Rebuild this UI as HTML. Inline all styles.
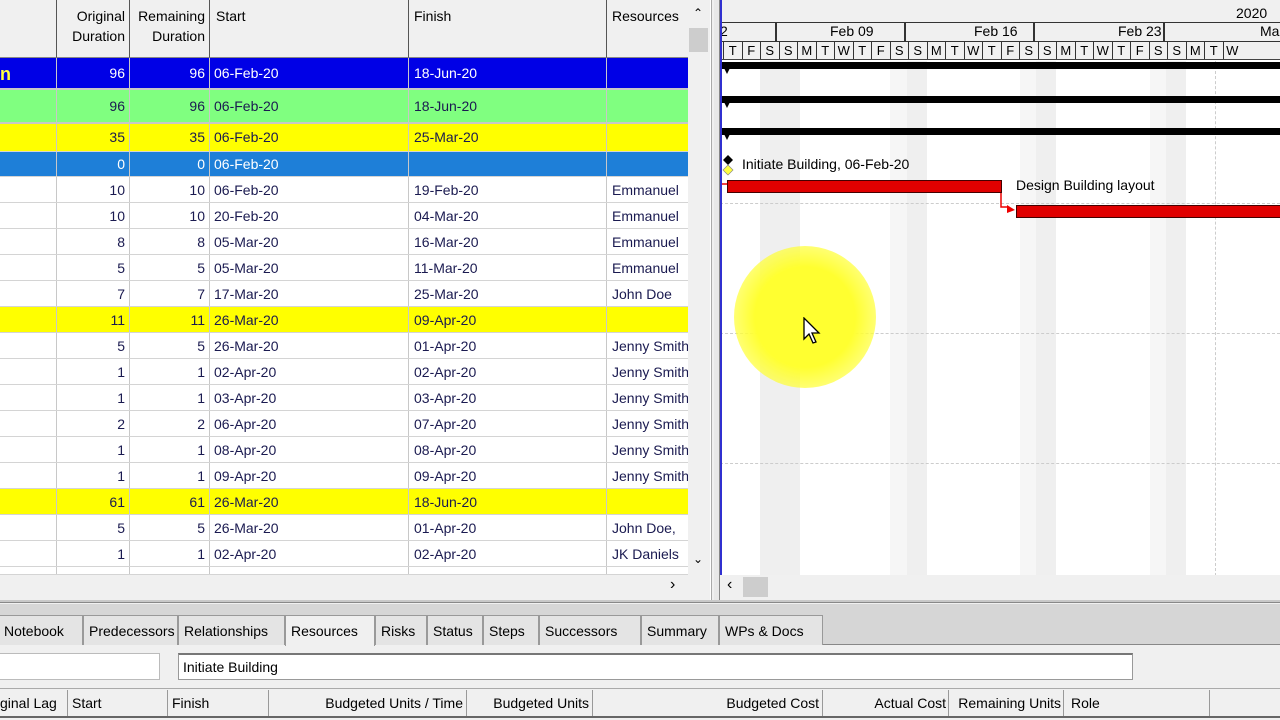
<!DOCTYPE html>
<html><head><style>
*{margin:0;padding:0;box-sizing:border-box}
body{width:1280px;height:720px;overflow:hidden;background:#f0f0f0;font-family:"Liberation Sans",Arial,sans-serif;font-size:14px;position:relative;color:#000}
.a{position:absolute}
.row{position:absolute;left:0;width:688px;height:26px;border-bottom:1px solid #d4d4d4;color:#1a1a50;background:#fff}
.row span{position:absolute;top:0;height:100%;line-height:26px;white-space:nowrap;overflow:hidden}
.c1{left:0;width:57px;border-right:1px solid #c8c8c8}
.c2{left:57px;width:73px;text-align:right;padding-right:4px;border-right:1px solid #c8c8c8}
.c3{left:130px;width:80px;text-align:right;padding-right:4px;border-right:1px solid #c8c8c8}
.c4{left:210px;width:199px;padding-left:4px;border-right:1px solid #c8c8c8}
.c5{left:409px;width:198px;padding-left:5px;border-right:1px solid #c8c8c8}
.c6{left:607px;width:81px;padding-left:5px}
.hd{position:absolute;top:0;height:58px;background:#f0f0f0;border-right:1px solid #555;border-bottom:1px solid #888;line-height:20px;padding-top:6px}
.tab{position:absolute;top:615px;height:30px;line-height:30px;border:1px solid #999;border-bottom:none;background:#e4e4e4;padding-left:5px;font-size:14px}
.bh{position:absolute;top:690px;height:26px;line-height:26px;border-right:1px solid #999;font-size:14px;white-space:nowrap;overflow:hidden}
.d{position:absolute;top:42px;height:17px;width:18.5px;text-align:center;font-size:13px;line-height:17px;border-left:1px solid #333}
</style></head><body>
<div class="hd" style="left:0;width:57px"></div>
<div class="hd" style="left:57px;width:73px;text-align:right;padding-right:4px">Original<br>Duration</div>
<div class="hd" style="left:130px;width:80px;text-align:right;padding-right:4px">Remaining<br>Duration</div>
<div class="hd" style="left:210px;width:199px;padding-left:6px">Start</div>
<div class="hd" style="left:409px;width:198px;padding-left:5px">Finish</div>
<div class="hd" style="left:607px;width:81px;padding-left:5px;border-right:none">Resources</div>
<div class="a" style="left:688px;top:0;width:22px;height:575px;background:#f0f0f0"></div>
<div class="a" style="left:689px;top:28px;width:19px;height:24px;background:#cdcdcd"></div>
<div class="a" style="left:693px;top:6px;font-size:12px">&#8963;</div>
<div class="a" style="left:693px;top:552px;font-size:12px">&#8964;</div>

<div class="row" style="top:58px;height:32px;background:#0000e6;color:#fff;border-bottom:2px solid #c8c8c8"><span class="c1" style="line-height:32px;font-weight:bold;font-size:18px;color:#ffff40">n</span><span class="c2" style="line-height:30px">96</span><span class="c3" style="line-height:30px">96</span><span class="c4" style="line-height:30px">06-Feb-20</span><span class="c5" style="line-height:30px">18-Jun-20</span><span class="c6"></span></div>
<div class="row" style="top:90px;height:34px;background:#80ff80;border-bottom:2px solid #c8c8c8"><span class="c1"></span><span class="c2" style="line-height:32px">96</span><span class="c3" style="line-height:32px">96</span><span class="c4" style="line-height:32px">06-Feb-20</span><span class="c5" style="line-height:32px">18-Jun-20</span></div>
<div class="row" style="top:124px;height:28px;background:#ffff00;color:#1a1a50"><span class="c1"></span><span class="c2">35</span><span class="c3">35</span><span class="c4">06-Feb-20</span><span class="c5">25-Mar-20</span></div>
<div class="row" style="top:152px;height:25px;background:#1e7fd8;color:#fff"><span class="c1" style="line-height:24px"></span><span class="c2" style="line-height:24px">0</span><span class="c3" style="line-height:24px">0</span><span class="c4" style="line-height:24px">06-Feb-20</span><span class="c5"></span></div>
<div class="row" style="top:177px"><span class="c1"></span><span class="c2">10</span><span class="c3">10</span><span class="c4">06-Feb-20</span><span class="c5">19-Feb-20</span><span class="c6">Emmanuel</span></div>
<div class="row" style="top:203px"><span class="c1"></span><span class="c2">10</span><span class="c3">10</span><span class="c4">20-Feb-20</span><span class="c5">04-Mar-20</span><span class="c6">Emmanuel</span></div>
<div class="row" style="top:229px"><span class="c1"></span><span class="c2">8</span><span class="c3">8</span><span class="c4">05-Mar-20</span><span class="c5">16-Mar-20</span><span class="c6">Emmanuel</span></div>
<div class="row" style="top:255px"><span class="c1"></span><span class="c2">5</span><span class="c3">5</span><span class="c4">05-Mar-20</span><span class="c5">11-Mar-20</span><span class="c6">Emmanuel</span></div>
<div class="row" style="top:281px"><span class="c1"></span><span class="c2">7</span><span class="c3">7</span><span class="c4">17-Mar-20</span><span class="c5">25-Mar-20</span><span class="c6">John Doe</span></div>
<div class="row" style="top:307px;background:#ffff00"><span class="c1"></span><span class="c2">11</span><span class="c3">11</span><span class="c4">26-Mar-20</span><span class="c5">09-Apr-20</span></div>
<div class="row" style="top:333px"><span class="c1"></span><span class="c2">5</span><span class="c3">5</span><span class="c4">26-Mar-20</span><span class="c5">01-Apr-20</span><span class="c6">Jenny Smith</span></div>
<div class="row" style="top:359px"><span class="c1"></span><span class="c2">1</span><span class="c3">1</span><span class="c4">02-Apr-20</span><span class="c5">02-Apr-20</span><span class="c6">Jenny Smith</span></div>
<div class="row" style="top:385px"><span class="c1"></span><span class="c2">1</span><span class="c3">1</span><span class="c4">03-Apr-20</span><span class="c5">03-Apr-20</span><span class="c6">Jenny Smith</span></div>
<div class="row" style="top:411px"><span class="c1"></span><span class="c2">2</span><span class="c3">2</span><span class="c4">06-Apr-20</span><span class="c5">07-Apr-20</span><span class="c6">Jenny Smith</span></div>
<div class="row" style="top:437px"><span class="c1"></span><span class="c2">1</span><span class="c3">1</span><span class="c4">08-Apr-20</span><span class="c5">08-Apr-20</span><span class="c6">Jenny Smith</span></div>
<div class="row" style="top:463px"><span class="c1"></span><span class="c2">1</span><span class="c3">1</span><span class="c4">09-Apr-20</span><span class="c5">09-Apr-20</span><span class="c6">Jenny Smith</span></div>
<div class="row" style="top:489px;background:#ffff00"><span class="c1"></span><span class="c2">61</span><span class="c3">61</span><span class="c4">26-Mar-20</span><span class="c5">18-Jun-20</span></div>
<div class="row" style="top:515px"><span class="c1"></span><span class="c2">5</span><span class="c3">5</span><span class="c4">26-Mar-20</span><span class="c5">01-Apr-20</span><span class="c6">John Doe,</span></div>
<div class="row" style="top:541px"><span class="c1"></span><span class="c2">1</span><span class="c3">1</span><span class="c4">02-Apr-20</span><span class="c5">02-Apr-20</span><span class="c6">JK Daniels</span></div>
<div class="row" style="top:567px;height:8px"><span class="c1"></span><span class="c2"></span><span class="c3"></span><span class="c4"></span><span class="c5"></span></div>
<div class="a" style="left:0;top:575px;width:712px;height:25px;background:#f0f0f0"></div>
<div class="a" style="left:670px;top:576px;font-size:16px">›</div>
<div class="a" style="left:710px;top:0;width:2px;height:600px;background:#fff;border-right:1px solid #aaa"></div>
<div class="a" style="left:714px;top:0;width:6px;height:600px;background:#e8e8e8;border-right:1px solid #888"></div>

<div class="a" style="left:720px;top:0;width:560px;height:575px;background:#fff;overflow:hidden">
 <div class="a" style="left:0;top:0;width:560px;height:60px;background:#f0f0f0;border-bottom:1px solid #444"></div>
 <div class="a" style="left:0;top:22px;width:560px;height:1px;background:#333"></div>
 <div class="a" style="left:0;top:41px;width:560px;height:1px;background:#333"></div>
 <div class="a" style="left:516px;top:5px;font-size:14px">2020</div>
 <div class="a" style="left:0;top:23px;font-size:14px">2</div>
 <div class="a" style="left:55px;top:22px;width:2px;height:20px;background:#333"></div>
 <div class="a" style="left:110px;top:23px;font-size:14px">Feb 09</div>
 <div class="a" style="left:184px;top:22px;width:2px;height:20px;background:#333"></div>
 <div class="a" style="left:254px;top:23px;font-size:14px">Feb 16</div>
 <div class="a" style="left:313px;top:22px;width:2px;height:20px;background:#333"></div>
 <div class="a" style="left:398px;top:23px;font-size:14px">Feb 23</div>
 <div class="a" style="left:443px;top:22px;width:2px;height:20px;background:#333"></div>
 <div class="a" style="left:540px;top:23px;font-size:14px">Ma</div>
 <div class="a" style="left:40px;top:61px;width:40px;height:520px;background:#efefef"></div>
 <div class="a" style="left:187px;top:61px;width:20px;height:520px;background:#efefef"></div>
 <div class="a" style="left:316px;top:61px;width:20px;height:520px;background:#efefef"></div>
 <div class="a" style="left:446px;top:61px;width:20px;height:520px;background:#efefef"></div>
 <div class="a" style="left:170px;top:61px;width:17px;height:520px;background:#f6f6f6"></div>
 <div class="a" style="left:300px;top:61px;width:16px;height:520px;background:#f6f6f6"></div>
 <div class="a" style="left:430px;top:61px;width:16px;height:520px;background:#f6f6f6"></div>
 <div class="d" style="left:3px">T</div><div class="d" style="left:21.5px">F</div><div class="d" style="left:40px">S</div>
 <div class="d" style="left:58.5px">S</div><div class="d" style="left:77px">M</div><div class="d" style="left:95.5px">T</div><div class="d" style="left:114px">W</div><div class="d" style="left:132.5px">T</div><div class="d" style="left:151px">F</div><div class="d" style="left:169.5px">S</div>
 <div class="d" style="left:188px">S</div><div class="d" style="left:206.5px">M</div><div class="d" style="left:225px">T</div><div class="d" style="left:243.5px">W</div><div class="d" style="left:262px">T</div><div class="d" style="left:280.5px">F</div><div class="d" style="left:299px">S</div>
 <div class="d" style="left:317.5px">S</div><div class="d" style="left:336px">M</div><div class="d" style="left:354.5px">T</div><div class="d" style="left:373px">W</div><div class="d" style="left:391.5px">T</div><div class="d" style="left:410px">F</div><div class="d" style="left:428.5px">S</div>
 <div class="d" style="left:447px">S</div><div class="d" style="left:465.5px">M</div><div class="d" style="left:484px">T</div><div class="d" style="left:502.5px">W</div>
 <div class="a" style="left:0;top:203px;width:560px;border-top:1px dashed #ccc"></div>
 <div class="a" style="left:0;top:333px;width:560px;border-top:1px dashed #ccc"></div>
 <div class="a" style="left:0;top:463px;width:560px;border-top:1px dashed #ccc"></div>
 <div class="a" style="left:495px;top:61px;height:520px;border-left:1px dashed #ccc"></div>
 <div class="a" style="left:0;top:0;width:2px;height:575px;background:#3030d0"></div>
 <div class="a" style="left:2px;top:62px;width:560px;height:7px;background:#000"></div>
 <div class="a" style="left:2px;top:96px;width:560px;height:7px;background:#000"></div>
 <div class="a" style="left:2px;top:128px;width:560px;height:7px;background:#000"></div>
 <svg class="a" style="left:0;top:60px" width="20" height="90"><path d="M4 8 L10 8 L7 14Z M4 42 L10 42 L7 48Z M4 74 L10 74 L7 80Z" fill="#000"/></svg>
 <svg class="a" style="left:0;top:150px" width="310" height="70"><path d="M8 5 L13 10 L8 15 L3 10Z" fill="#000"/><path d="M8 15 L13 20 L8 25 L3 20Z" fill="#ffff40" stroke="#888" stroke-width=".7"/><path d="M2 34 H7" stroke="#e00" stroke-width="1.5"/><path d="M281 43 V57 H287" stroke="#e00" fill="none" stroke-width="1.5"/><path d="M287 55 L295 60 L287 63Z" fill="#e00"/></svg>
 <div class="a" style="left:22px;top:156px;font-size:14px">Initiate Building, 06-Feb-20</div>
 <div class="a" style="left:7px;top:180px;width:275px;height:13px;background:#e00000;border:1px solid #400"></div>
 <div class="a" style="left:296px;top:177px;font-size:14px">Design Building layout</div>
 <div class="a" style="left:296px;top:205px;width:270px;height:13px;background:#e00000;border:1px solid #400"></div>
 <div class="a" style="left:14px;top:246px;width:142px;height:142px;border-radius:50%;background:radial-gradient(circle,#ffff30 50%,rgba(255,255,60,.6) 78%,rgba(255,255,255,0) 100%)"></div>
 <svg class="a" style="left:83px;top:317px" width="20" height="30"><path d="M1 1 L1 22 L6 17 L10 26 L13 25 L9 16 L16 16Z" fill="#fff" stroke="#000" stroke-width="1.3"/></svg>
</div>
<div class="a" style="left:720px;top:575px;width:560px;height:25px;background:#f0f0f0"></div>
<div class="a" style="left:727px;top:576px;font-size:16px">‹</div>
<div class="a" style="left:743px;top:577px;width:25px;height:20px;background:#cdcdcd"></div>

<div class="a" style="left:0;top:600px;width:1280px;height:3px;background:#c8c8c8;border-bottom:1px solid #888"></div>
<div class="a" style="left:0;top:604px;width:1280px;height:41px;background:#d6d6d6"></div>
<div class="a" style="left:0;top:644px;width:1280px;height:1px;background:#888"></div>
<div class="tab" style="left:-2px;width:85px">Notebook</div>
<div class="tab" style="left:83px;width:95px">Predecessors</div>
<div class="tab" style="left:178px;width:107px">Relationships</div>
<div class="tab" style="left:285px;width:90px;background:#f0f0f0;height:31px">Resources</div>
<div class="tab" style="left:375px;width:52px">Risks</div>
<div class="tab" style="left:427px;width:56px">Status</div>
<div class="tab" style="left:483px;width:56px">Steps</div>
<div class="tab" style="left:539px;width:102px">Successors</div>
<div class="tab" style="left:641px;width:78px">Summary</div>
<div class="tab" style="left:719px;width:104px">WPs &amp; Docs</div>
<div class="a" style="left:0;top:653px;width:160px;height:27px;background:#fff;border:1px solid #bbb;border-left:none"></div>
<div class="a" style="left:178px;top:653px;width:955px;height:27px;background:#fff;border:1px solid #999;border-top:2px solid #777;padding-left:4px;line-height:24px">Initiate Building</div>
<div class="a" style="left:0;top:688px;width:1280px;height:30px;background:#f0f0f0;border-top:1px solid #aaa;border-bottom:2px solid #666"></div>
<div class="bh" style="left:0;width:68px">ginal Lag</div>
<div class="bh" style="left:68px;width:100px;padding-left:4px">Start</div>
<div class="bh" style="left:168px;width:101px;padding-left:4px">Finish</div>
<div class="bh" style="left:269px;width:198px;text-align:right;padding-right:3px">Budgeted Units / Time</div>
<div class="bh" style="left:467px;width:126px;text-align:right;padding-right:3px">Budgeted Units</div>
<div class="bh" style="left:593px;width:230px;text-align:right;padding-right:3px">Budgeted Cost</div>
<div class="bh" style="left:823px;width:126px;text-align:right;padding-right:2px">Actual Cost</div>
<div class="bh" style="left:949px;width:115px;text-align:right;padding-right:2px">Remaining Units</div>
<div class="bh" style="left:1064px;width:146px;padding-left:7px">Role</div>
</body></html>
